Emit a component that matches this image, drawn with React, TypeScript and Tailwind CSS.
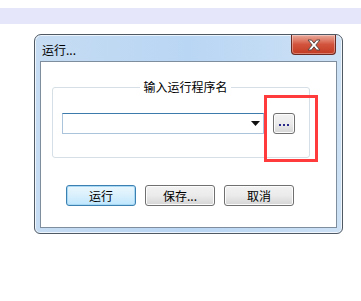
const cjk = "font-['Microsoft_YaHei','Noto_Sans_CJK_SC',sans-serif]";

function WinButton({ label, primary }: { label: string; primary?: boolean }) {
  return (
    <button
      className={
        "h-[21px] w-[70px] rounded-[3px] border text-[12px] leading-none text-black " +
        (primary
          ? "border-[#3c7fb1] bg-linear-to-b from-[#eaf6fd] via-[#d9f0fc] to-[#bee6fd] shadow-[inset_0_0_0_1px_#a7d9f5]"
          : "border-[#707070] bg-linear-to-b from-[#f2f2f2] via-[#ebebeb] to-[#d5d5d5] shadow-[inset_0_0_0_1px_#fcfcfc]")
      }
    >
      {label}
    </button>
  );
}

function CloseButton() {
  return (
    <div className="mr-[6px] flex h-[20px] w-[45px] items-center justify-center rounded-b-[4px] border border-t-0 border-[#6b2a22] bg-linear-to-b from-[#e9a99b] via-[#d2533c] to-[#c23a22] shadow-[inset_0_0_0_1px_rgba(255,255,255,0.35)]">
      <svg width="16" height="12" viewBox="0 0 16 12">
        <path
          d="M2 1h3.5L8 4.2 10.5 1H14l-4.2 5L14 11h-3.5L8 7.8 5.5 11H2l4.2-5z"
          fill="#ffffff"
          stroke="#5a4a48"
          strokeWidth="1"
          strokeLinejoin="round"
        />
      </svg>
    </div>
  );
}

export default function App() {
  return (
    <div className={"relative h-[301px] w-[361px] overflow-hidden bg-white " + cjk}>
      <div className="mt-[8px] h-[16px] bg-[#e6e6fa]" />

      <div className="ml-[34px] mt-[10px] flex h-[200px] w-[309px] flex-col rounded-t-[7px] rounded-b-[6px] border border-[#4f5964] bg-linear-to-r from-[#c6dcf2] via-[#b9d6f4] to-[#cde1f5] shadow-[inset_0_0_0_1px_rgba(255,255,255,0.7)]">
        <div className="flex h-[26px] shrink-0 items-start justify-between">
          <span className="pl-[7px] pt-[8px] text-[12px] leading-[14px] text-black">运行...</span>
          <CloseButton />
        </div>

        <div className="relative mx-[5px] mb-[5px] flex-1 border border-[#7f8e9e] bg-white">
          <fieldset className="ml-[11px] mt-[18px] h-[78px] w-[258px] rounded-[3px] border border-[#d5dfe5] pl-[9px] pt-[19px]">
            <legend className="mx-auto px-[3px] text-[12px] leading-[14px] text-black">输入运行程序名</legend>
            <div className="flex items-center gap-[9px]">
              <div className="flex h-[21px] w-[202px] items-center justify-end border border-[#abc4dc] border-t-[#3d7bad] pr-[3px]">
                <svg width="9" height="5" viewBox="0 0 9 5">
                  <path d="M0 0h9L4.5 5z" fill="#111" />
                </svg>
              </div>
              <div className="flex h-[21px] w-[22px] items-center justify-center rounded-[3px] border border-[#707070] bg-linear-to-b from-[#f2f2f2] via-[#ebebeb] to-[#d5d5d5] shadow-[inset_0_0_0_1px_#fcfcfc]">
                <span className="flex gap-[2px] pt-[3px]">
                  <i className="block h-[2px] w-[2px] bg-[#2a2a8a]" />
                  <i className="block h-[2px] w-[2px] bg-[#2a2a8a]" />
                  <i className="block h-[2px] w-[2px] bg-[#2a2a8a]" />
                </span>
              </div>
            </div>
          </fieldset>

          <div className="ml-[25px] mt-[27px] flex gap-[9px]">
            <WinButton label="运行" primary />
            <WinButton label="保存..." />
            <WinButton label="取消" />
          </div>

          <div className="absolute left-[223px] top-[33px] h-[67px] w-[54px] border-[3px] border-[#ff3b3b]" />
        </div>
      </div>
    </div>
  );
}
